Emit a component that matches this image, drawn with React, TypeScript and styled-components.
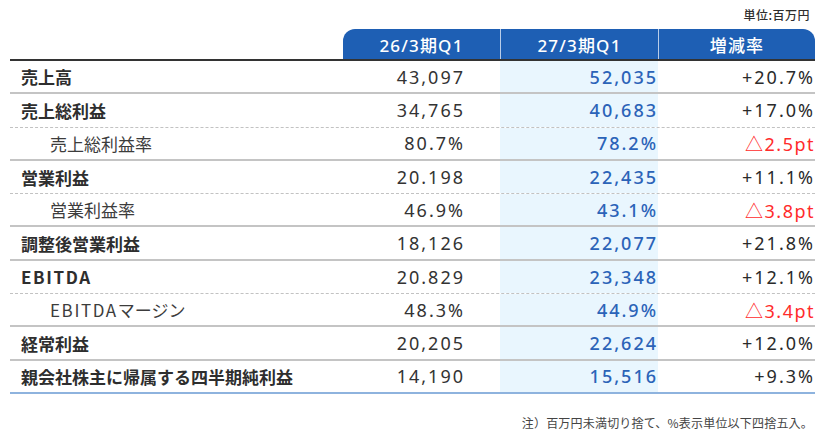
import React from "react";
import styled, { createGlobalStyle } from "styled-components";

type Line = "solid" | "dotted" | "end";

type Item = {
  label: string;
  prev: string;
  curr: string;
  diff: string;
  sub?: boolean;
  line: Line;
};

const rows: Item[] = [
  { label: "売上高", prev: "43,097", curr: "52,035", diff: "+20.7%", line: "solid" },
  { label: "売上総利益", prev: "34,765", curr: "40,683", diff: "+17.0%", line: "dotted" },
  { label: "売上総利益率", prev: "80.7%", curr: "78.2%", diff: "△2.5pt", sub: true, line: "solid" },
  { label: "営業利益", prev: "20.198", curr: "22,435", diff: "+11.1%", line: "dotted" },
  { label: "営業利益率", prev: "46.9%", curr: "43.1%", diff: "△3.8pt", sub: true, line: "solid" },
  { label: "調整後営業利益", prev: "18,126", curr: "22,077", diff: "+21.8%", line: "solid" },
  { label: "EBITDA", prev: "20.829", curr: "23,348", diff: "+12.1%", line: "dotted" },
  { label: "EBITDAマージン", prev: "48.3%", curr: "44.9%", diff: "△3.4pt", sub: true, line: "solid" },
  { label: "経常利益", prev: "20,205", curr: "22,624", diff: "+12.0%", line: "solid" },
  { label: "親会社株主に帰属する四半期純利益", prev: "14,190", curr: "15,516", diff: "+9.3%", line: "end" },
];

// Latin runs in labels are set a little wider, like the original font
function splitLatin(text: string) {
  const parts = text.split(/([A-Za-z]+)/);
  return parts.map((p, i) =>
    /^[A-Za-z]+$/.test(p) ? <Latin key={i}>{p}</Latin> : <React.Fragment key={i}>{p}</React.Fragment>
  );
}

export default function App() {
  return (
    <>
      <GlobalStyle />
      <Page>
        <Unit>単位:百万円</Unit>
        <HeaderRow>
          <span />
          <Tab $pos="first">26/3期Q1</Tab>
          <Tab $pos="mid">27/3期Q1</Tab>
          <Tab $pos="last">増減率</Tab>
        </HeaderRow>
        {rows.map((r) => (
          <Row key={r.label} $line={r.line}>
            <Label $sub={r.sub}>{splitLatin(r.label)}</Label>
            <Prev>{r.prev}</Prev>
            <Curr>{r.curr}</Curr>
            <Diff $down={r.diff.startsWith("△")}>{r.diff}</Diff>
          </Row>
        ))}
        <Note>注）百万円未満切り捨て、%表示単位以下四捨五入。</Note>
      </Page>
    </>
  );
}

const GlobalStyle = createGlobalStyle`
  body {
    margin: 0;
    background: #ffffff;
    font-family: "Noto Sans", "Noto Sans CJK JP", sans-serif;
    color: #333333;
  }
`;

const Page = styled.div`
  width: 805px;
  padding-left: 10px;
  display: flex;
  flex-direction: column;
`;

const Unit = styled.div`
  height: 29px;
  display: flex;
  align-items: flex-end;
  justify-content: flex-end;
  padding-right: 5px;
  padding-bottom: 6px;
  box-sizing: border-box;
  font-family: "Noto Sans CJK JP", sans-serif;
  font-size: 12px;
  font-weight: 500;
  letter-spacing: 0.5px;
  line-height: 16px;
  color: #2e2e2e;
`;

const columns = "333px 157px 158px 157px";

const HeaderRow = styled.div`
  display: grid;
  grid-template-columns: ${columns};
  height: 30px;
  border-bottom: 2px solid #333333;
`;

const Tab = styled.div<{ $pos: "first" | "mid" | "last" }>`
  display: flex;
  align-items: center;
  justify-content: center;
  background: #1e5fb4;
  color: #ffffff;
  font-size: 17px;
  font-weight: 500;
  letter-spacing: 1.2px;
  border-left: ${(p) => (p.$pos === "first" ? "none" : "1px solid #b9cde9")};
  border-top-left-radius: ${(p) => (p.$pos === "first" ? "12px" : "0")};
  border-top-right-radius: ${(p) => (p.$pos === "last" ? "12px" : "0")};
`;

const lineStyle = (line: Line) => {
  if (line === "dotted") return "1px dashed #c2c2c2";
  if (line === "end") return "2px solid #8eb3de";
  return "2px solid #c4c4c4";
};

const Row = styled.div<{ $line: Line }>`
  display: grid;
  grid-template-columns: ${columns};
  height: 33.3px;
  box-sizing: border-box;
  border-bottom: ${(p) => lineStyle(p.$line)};
`;

const Label = styled.div<{ $sub?: boolean }>`
  display: flex;
  align-items: center;
  padding-left: ${(p) => (p.$sub ? "40px" : "11px")};
  font-family: "Noto Sans CJK JP", sans-serif;
  font-size: 17px;
  font-weight: ${(p) => (p.$sub ? 400 : 700)};
  color: ${(p) => (p.$sub ? "#3c3c3c" : "#2e2e2e")};
  white-space: nowrap;
`;

const Latin = styled.span`
  letter-spacing: 1.6px;
`;

const Cell = styled.div`
  display: flex;
  align-items: center;
  justify-content: flex-end;
  font-size: 18px;
  letter-spacing: 2px;
  white-space: nowrap;
`;

const Prev = styled(Cell)`
  padding-right: 35px;
  color: #333333;
`;

const Curr = styled(Cell)`
  padding-right: 0;
  background: #e9f6fe;
  color: #2b63b8;
  font-weight: 500;
`;

const Diff = styled(Cell)<{ $down?: boolean }>`
  padding-right: 0;
  color: ${(p) => (p.$down ? "#ff2b2b" : "#2a2a2a")};
  letter-spacing: ${(p) => (p.$down ? "1.5px" : "2px")};
`;

const Note = styled.div`
  margin-top: 21px;
  text-align: right;
  padding-right: 2px;
  font-family: "Noto Sans CJK JP", sans-serif;
  font-size: 12px;
  letter-spacing: 0.2px;
  line-height: 16px;
  color: #444444;
`;
